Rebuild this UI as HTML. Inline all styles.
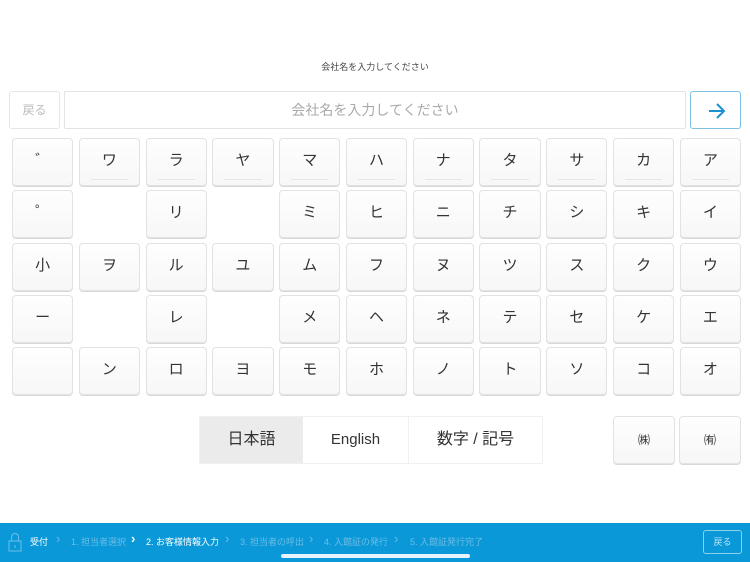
<!DOCTYPE html>
<html><head><meta charset="utf-8">
<style>
*{box-sizing:border-box;margin:0;padding:0}
body{width:750px;height:562px;background:#fff;position:relative;overflow:hidden;font-family:"Liberation Sans","Noto Sans CJK JP",sans-serif;color:#333}
.title{position:absolute;top:60px;left:0;width:750px;text-align:center;font-size:9px;color:#444}
.back{position:absolute;left:9px;top:91px;width:51px;height:38px;border:1px solid #e6e6e6;border-radius:3px;font-size:12px;color:#bbb;text-align:center;line-height:36px}
.input{position:absolute;left:64px;top:91px;width:622px;height:38px;border:1px solid #e3e3e3;border-radius:2px;font-size:14px;color:#aaa;text-align:center;line-height:36px}
.go{position:absolute;left:690px;top:91px;width:51px;height:38px;border:1px solid #7fc0e6;border-radius:3px}
.grid{position:absolute;left:12px;top:138px;width:729px;display:grid;grid-template-columns:repeat(11,1fr);column-gap:5.6px;row-gap:4.3px;grid-auto-rows:48px}
.k{border:1px solid #e2e2e2;border-radius:4px;background:linear-gradient(#fefefe,#f7f7f7);box-shadow:0 1px 0 #d8d8d8;font-size:15px;text-align:center;line-height:44px;position:relative;color:#333}
.u:after{content:"";position:absolute;left:11px;right:11px;bottom:5px;height:1px;background:#e6e6e6}
.tabs{position:absolute;left:199px;top:416px;height:48px;display:flex;border:1px solid #f0f0f0}
.tabs div{font-size:16px;text-align:center;line-height:46px;color:#333}
.sk{position:absolute;top:416px;width:62px;height:48px;font-size:12px;line-height:46px}
.foot{position:absolute;left:0;top:523px;width:750px;height:39px;background:#0a98d8;color:#fff;font-size:9px}
.foot span{position:absolute;top:12px}
.dim{color:#6bbde6}
.ch{font-size:13px;top:8px!important}
.fb{position:absolute;left:703px;top:7px;width:39px;height:24px;border:1px solid #8fd0ef;border-radius:3px;color:#bfe4f6;text-align:center;line-height:22px;font-size:9px}
.bar{position:absolute;left:281px;top:31px;width:189px;height:4px;border-radius:2px;background:#e8f4fb}
</style></head><body>
<div class="title">会社名を入力してください</div>
<div class="back">戻る</div>
<div class="input">会社名を入力してください</div>
<div class="go"><svg width="51" height="38" viewBox="0 0 51 38"><path d="M18 19H33M26 12L33 19L26 26" stroke="#1c8fd0" stroke-width="2" fill="none"/></svg></div>
<div class="grid">
<div class="k">゛</div><div class="k u">ワ</div><div class="k u">ラ</div><div class="k u">ヤ</div><div class="k u">マ</div><div class="k u">ハ</div><div class="k u">ナ</div><div class="k u">タ</div><div class="k u">サ</div><div class="k u">カ</div><div class="k u">ア</div>
<div class="k">゜</div><div></div><div class="k">リ</div><div></div><div class="k">ミ</div><div class="k">ヒ</div><div class="k">ニ</div><div class="k">チ</div><div class="k">シ</div><div class="k">キ</div><div class="k">イ</div>
<div class="k">小</div><div class="k">ヲ</div><div class="k">ル</div><div class="k">ユ</div><div class="k">ム</div><div class="k">フ</div><div class="k">ヌ</div><div class="k">ツ</div><div class="k">ス</div><div class="k">ク</div><div class="k">ウ</div>
<div class="k">ー</div><div></div><div class="k">レ</div><div></div><div class="k">メ</div><div class="k">ヘ</div><div class="k">ネ</div><div class="k">テ</div><div class="k">セ</div><div class="k">ケ</div><div class="k">エ</div>
<div class="k"></div><div class="k">ン</div><div class="k">ロ</div><div class="k">ヨ</div><div class="k">モ</div><div class="k">ホ</div><div class="k">ノ</div><div class="k">ト</div><div class="k">ソ</div><div class="k">コ</div><div class="k">オ</div>
</div>
<div class="tabs"><div style="width:103px;background:#ebebeb">日本語</div><div style="width:106px;border-right:1px solid #f0f0f0;font-size:15px">English</div><div style="width:133px">数字 / 記号</div></div>
<div class="k sk" style="left:613px">㈱</div>
<div class="k sk" style="left:679px">㈲</div>
<div class="foot">
<svg style="position:absolute;left:8px;top:9px" width="14" height="20" viewBox="0 0 14 20"><rect x="1" y="9" width="12" height="10" fill="none" stroke="#6cbfe8" stroke-width="1"/><path d="M3.5 9V5a3.5 3.5 0 0 1 7 0v4" fill="none" stroke="#6cbfe8"/><path d="M7 13v3" stroke="#6cbfe8"/></svg>
<span style="left:30px">受付</span>
<span class="dim ch" style="left:56px">›</span>
<span class="dim" style="left:71px">1. 担当者選択</span>
<span class="ch" style="left:131px;font-weight:bold">›</span>
<span style="left:146px">2. お客様情報入力</span>
<span class="dim ch" style="left:225px">›</span>
<span class="dim" style="left:240px">3. 担当者の呼出</span>
<span class="dim ch" style="left:309px">›</span>
<span class="dim" style="left:324px">4. 入館証の発行</span>
<span class="dim ch" style="left:394px">›</span>
<span class="dim" style="left:410px">5. 入館証発行完了</span>
<div class="bar"></div>
<div class="fb">戻る</div>
</div>
</body></html>
